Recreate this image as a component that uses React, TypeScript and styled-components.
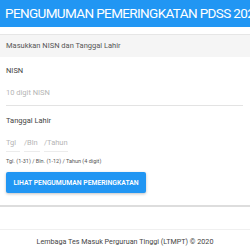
import React from "react";
import styled, { createGlobalStyle } from "styled-components";

const GlobalStyle = createGlobalStyle`
  body {
    margin: 0;
    background: #ffffff;
    font-family: Roboto, "Liberation Sans", sans-serif;
  }
`;

const TopBar = styled.div`
  height: 27px;
  background: #2196f3;
  color: #ffffff;
  font-size: 13.5px;
  letter-spacing: -0.62px;
  line-height: 27px;
  padding-left: 5px;
  white-space: nowrap;
  overflow: hidden;
`;

const Card = styled.div`
  margin-top: 7px;
  border-top: 1px solid #e6e6e6;
  border-bottom: 2px solid #dddddd;
`;

const CardHead = styled.div`
  height: 22px;
  line-height: 22px;
  background: #f5f5f5;
  padding: 0 6px;
  font-size: 7.5px;
  color: #555555;
`;

const CardBody = styled.div`
  padding: 7px 6px 12px;
  display: flex;
  flex-direction: column;
  align-items: flex-start;
`;

const Label = styled.div`
  font-size: 7.5px;
  color: #444444;
  height: 14px;
  line-height: 14px;
`;

const FieldLine = styled.div`
  align-self: stretch;
  height: 24px;
  padding-top: 3px;
  line-height: 24px;
  font-size: 7.5px;
  color: #b5b5b5;
  border-bottom: 1px solid #e3e3e3;
  margin: 0 1px 8px 0;
`;

const DateRow = styled.div`
  display: flex;
  gap: 4px;
  margin-top: 6px;
`;

const DatePart = styled.div<{ w: number }>`
  width: ${(p) => p.w}px;
  font-size: 7.5px;
  color: #b5b5b5;
  border-bottom: 1px solid #ececec;
  line-height: 17px;
`;

const Hint = styled.div`
  font-size: 5.5px;
  color: #555555;
  margin-top: 4px;
  height: 10px;
  line-height: 10px;
`;

const Button = styled.button`
  margin-top: 6px;
  width: 140px;
  height: 21px;
  border: none;
  border-radius: 2px;
  background: #2196f3;
  color: #ffffff;
  font-family: Roboto, "Liberation Sans", sans-serif;
  font-size: 6.8px;
  font-weight: 600;
  box-shadow: 0 1px 3px rgba(0, 0, 0, 0.25);
  padding: 0;
`;

const Footer = styled.div`
  margin-top: 22px;
  border-top: 1px solid #f0f0f0;
  text-align: center;
  font-size: 7.2px;
  color: #444444;
  padding-top: 7px;
`;

const App = () => {
  return (
    <>
      <GlobalStyle />
      <TopBar>PENGUMUMAN PEMERINGKATAN PDSS 2020</TopBar>
      <Card>
        <CardHead>Masukkan NISN dan Tanggal Lahir</CardHead>
        <CardBody>
          <Label>NISN</Label>
          <FieldLine>10 digit NISN</FieldLine>
          <Label>Tanggal Lahir</Label>
          <DateRow>
            <DatePart w={14}>Tgl</DatePart>
            <DatePart w={16}>/Bln</DatePart>
            <DatePart w={24}>/Tahun</DatePart>
          </DateRow>
          <Hint>Tgl. (1-31) / Bln. (1-12) / Tahun (4 digit)</Hint>
          <Button type="button">LIHAT PENGUMUMAN PEMERINGKATAN</Button>
        </CardBody>
      </Card>
      <Footer>Lembaga Tes Masuk Perguruan Tinggi (LTMPT) © 2020</Footer>
    </>
  );
};

export default App;
